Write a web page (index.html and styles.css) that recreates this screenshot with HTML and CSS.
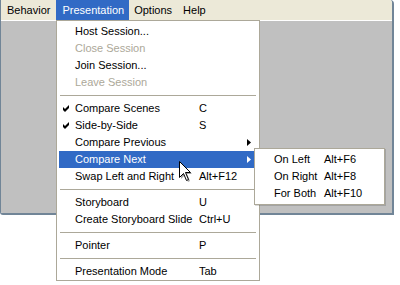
FILE: index.html
```html
<!DOCTYPE html>
<html lang="en">
<head>
    <meta charset="UTF-8">
    <title>Presentation menu</title>
    <link rel="stylesheet" href="styles.css">
</head>
<body>
    <div class="window">
        <div class="menubar">
            <span class="menu-title">Behavior</span>
            <span class="menu-title active">Presentation</span>
            <span class="menu-title">Options</span>
            <span class="menu-title">Help</span>
        </div>
        <div class="canvas"></div>
    </div>

    <div class="dropdown main-menu">
        <div class="item"><span class="check"></span><span class="label">Host Session...</span><span class="key"></span><span class="arrow"></span></div>
        <div class="item disabled"><span class="check"></span><span class="label">Close Session</span><span class="key"></span><span class="arrow"></span></div>
        <div class="item"><span class="check"></span><span class="label">Join Session...</span><span class="key"></span><span class="arrow"></span></div>
        <div class="item disabled"><span class="check"></span><span class="label">Leave Session</span><span class="key"></span><span class="arrow"></span></div>
        <div class="separator"></div>
        <div class="item">
            <span class="check"><svg width="7" height="7" viewBox="0 0 7 7"><path d="M0 2 L2 4 L6 0 L6 3 L2 7 L0 5 Z" fill="#000"/></svg></span>
            <span class="label">Compare Scenes</span><span class="key">C</span><span class="arrow"></span>
        </div>
        <div class="item">
            <span class="check"><svg width="7" height="7" viewBox="0 0 7 7"><path d="M0 2 L2 4 L6 0 L6 3 L2 7 L0 5 Z" fill="#000"/></svg></span>
            <span class="label">Side-by-Side</span><span class="key">S</span><span class="arrow"></span>
        </div>
        <div class="item">
            <span class="check"></span><span class="label">Compare Previous</span><span class="key"></span>
            <span class="arrow"><svg width="4" height="7" viewBox="0 0 4 7"><path d="M0 0 L4 3.5 L0 7 Z" fill="#000"/></svg></span>
        </div>
        <div class="item selected">
            <span class="check"></span><span class="label">Compare Next</span><span class="key"></span>
            <span class="arrow"><svg width="4" height="7" viewBox="0 0 4 7"><path d="M0 0 L4 3.5 L0 7 Z" fill="#fff"/></svg></span>
        </div>
        <div class="item"><span class="check"></span><span class="label">Swap Left and Right</span><span class="key">Alt+F12</span><span class="arrow"></span></div>
        <div class="separator"></div>
        <div class="item"><span class="check"></span><span class="label">Storyboard</span><span class="key">U</span><span class="arrow"></span></div>
        <div class="item"><span class="check"></span><span class="label">Create Storyboard Slide</span><span class="key">Ctrl+U</span><span class="arrow"></span></div>
        <div class="separator"></div>
        <div class="item"><span class="check"></span><span class="label">Pointer</span><span class="key">P</span><span class="arrow"></span></div>
        <div class="separator"></div>
        <div class="item"><span class="check"></span><span class="label">Presentation Mode</span><span class="key">Tab</span><span class="arrow"></span></div>
    </div>

    <div class="dropdown sub-menu">
        <div class="item"><span class="check"></span><span class="label">On Left</span><span class="key">Alt+F6</span></div>
        <div class="item"><span class="check"></span><span class="label">On Right</span><span class="key">Alt+F8</span></div>
        <div class="item"><span class="check"></span><span class="label">For Both</span><span class="key">Alt+F10</span></div>
    </div>

    <svg class="cursor" width="14" height="22" viewBox="0 0 14 22">
        <path d="M2 2 L2 18 L6 14 L9 21 L11 20 L8 13 L13 13 Z" fill="rgba(0,0,0,0.35)"/>
        <path d="M0.5 0.5 L0.5 16.5 L4.5 12.5 L7.5 19.5 L9.5 18.5 L6.5 11.5 L11.5 11.5 Z" fill="#fff" stroke="#000" stroke-width="1"/>
    </svg>
</body>
</html>
```

FILE: styles.css
```css
body {
    margin: 0;
    background-color: #fff;
    font-family: "Liberation Sans", Arial, sans-serif;
    font-size: 11px;
    color: #000;
}
.window {
    width: 391px;
    height: 213px;
    border-left: 1px solid #718597;
    border-right: 2px solid #718597;
    border-bottom: 2px solid #718597;
    border-top-right-radius: 4px;
    border-bottom-left-radius: 3px;
    overflow: hidden;
    display: flex;
    flex-direction: column;
}
.menubar {
    height: 20px;
    flex-shrink: 0;
    background-color: #ece9d8;
    border-bottom: 1px solid #fff;
    display: flex;
    align-items: stretch;
}
.menu-title {
    padding: 0 6px;
    line-height: 20px;
}
.menu-title.active {
    background-color: #316ac5;
    color: #fff;
    padding: 0 5px 0 6px;
}
.menu-title:nth-child(3) {
    padding: 0 5px;
}
.canvas {
    flex: 1;
    background-color: #c0c0c0;
}

.dropdown {
    position: absolute;
    background-color: #fff;
    border: 1px solid #aca899;
    padding: 2px;
}
.main-menu {
    left: 56px;
    top: 20px;
    width: 198px;
    padding-bottom: 0;
}
.sub-menu {
    left: 254px;
    top: 148px;
    width: 125px;
    box-shadow: 1px 1px 0 rgba(0, 0, 0, 0.15);
}
.item {
    height: 17px;
    line-height: 17px;
    display: grid;
    grid-template-columns: 16px 124px 46px 12px;
    white-space: nowrap;
}
.sub-menu .item {
    grid-template-columns: 17px 50px 1fr;
}
.item.disabled {
    color: #aca899;
}
.item.selected {
    background-color: #316ac5;
    color: #fff;
}
.check {
    display: flex;
    align-items: center;
    padding-left: 4px;
}
.arrow {
    display: flex;
    align-items: center;
    padding-left: 2px;
}
.separator {
    height: 1px;
    background-color: #aca899;
    margin: 4px 1px;
}

.cursor {
    position: absolute;
    left: 179px;
    top: 161px;
}
```
